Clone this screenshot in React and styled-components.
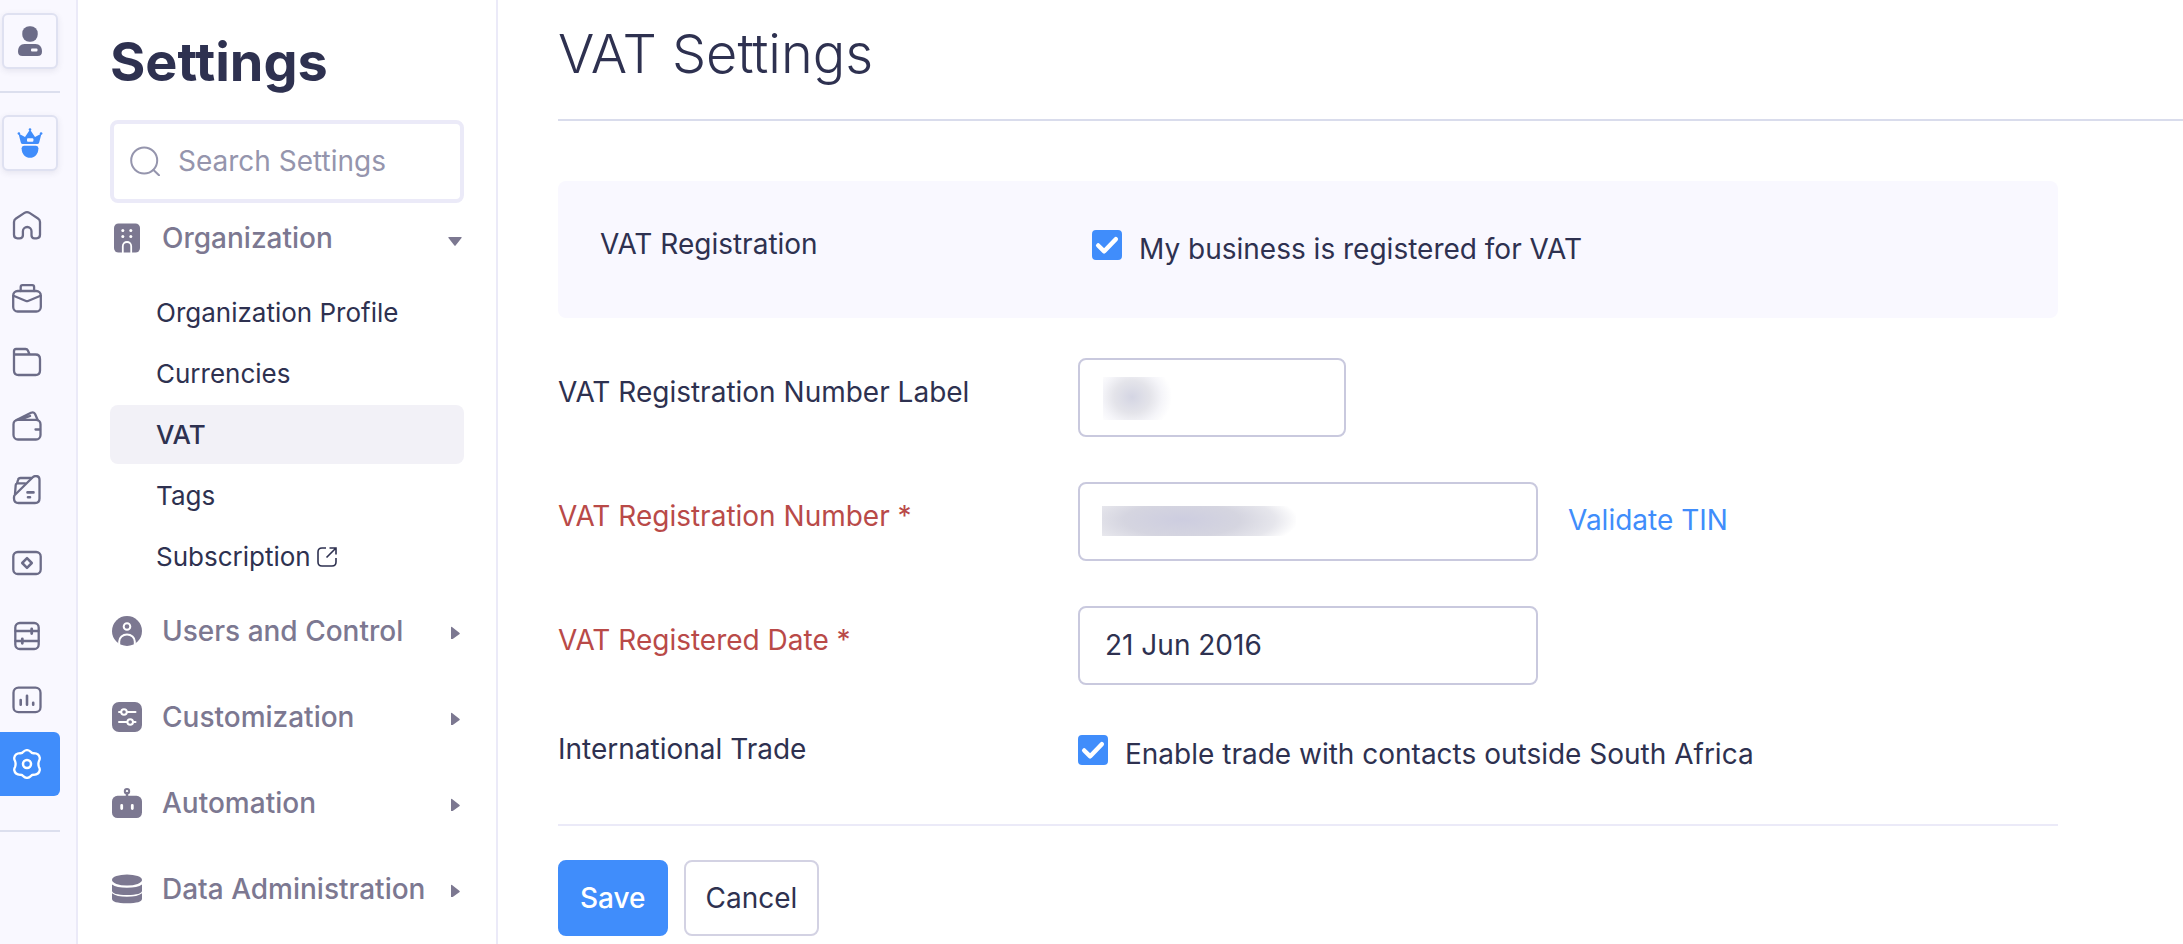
import React, { useState } from 'react';
import styled, { createGlobalStyle } from 'styled-components';

const GlobalStyle = createGlobalStyle`
    *, *::before, *::after {
        box-sizing: border-box;
    }

    body {
        margin: 0;
        background-color: #fff;
        color: #2e3150;
        font-family: Inter, "Liberation Sans", sans-serif;
        font-size: 28px;
        line-height: 38px;
    }

    button, input {
        font: inherit;
        color: inherit;
    }
`;

const Page = styled.div`
    display: flex;
    min-height: 100vh;
`;

/* ---- icon rail ---- */

const Rail = styled.nav`
    flex: none;
    width: 78px;
    padding-top: 13px;
    background-color: #f9f8ff;
    border-right: 2px solid #ebeaf8;
    color: #6c6c88;
`;

const RailTile = styled.button`
    display: flex;
    align-items: center;
    justify-content: center;
    width: 56px;
    height: 56px;
    margin-left: 2px;
    padding: 0;
    background-color: #f9f8ff;
    border: 2px solid #dfe1f1;
    border-radius: 6px;
    box-shadow: 0 2px 6px rgba(60, 60, 100, 0.1);
    color: ${(props) => (props.$brand ? '#408dfb' : 'inherit')};
    cursor: pointer;
`;

const RailDivider = styled.hr`
    width: 60px;
    height: 2px;
    margin: ${(props) => (props.$wide ? '34px 0 0' : '22px 0')};
    border: none;
    background-color: #dcdfee;
`;

const RailGroup = styled.div`
    margin-top: ${(props) => (props.$first ? '22px' : '9px')};
`;

const RailLink = styled.a`
    display: flex;
    align-items: center;
    width: 60px;
    height: 64px;
    padding-left: 12px;
    border-radius: 0 6px 6px 0;
    color: ${(props) => (props.$active ? '#fff' : 'inherit')};
    background-color: ${(props) => (props.$active ? '#408dfb' : 'transparent')};
`;

/* ---- settings sidebar ---- */

const Sidebar = styled.aside`
    flex: none;
    width: 420px;
    padding: 28px 32px 24px;
    border-right: 2px solid #ebeaf8;
`;

const SidebarTitle = styled.h2`
    margin: 0 0 24px;
    font-size: 54px;
    line-height: 68px;
    font-weight: 700;
`;

const SearchBox = styled.label`
    display: flex;
    align-items: center;
    gap: 18px;
    height: 83px;
    padding: 0 16px 2px;
    border: 4px solid #ebeaf8;
    border-radius: 8px;
    color: #9595ad;
`;

const SearchInput = styled.input`
    flex: 1;
    min-width: 0;
    padding: 0;
    border: none;
    outline: none;
    background: none;

    &::placeholder {
        color: #9595ad;
        opacity: 1;
    }
`;

const Category = styled.button`
    display: flex;
    align-items: center;
    width: 100%;
    margin-top: ${(props) => (props.$first ? '16px' : '48px')};
    padding: 0 0 0 2px;
    border: none;
    background: none;
    color: #7c7891;
    font-weight: 500;
    text-align: left;
    cursor: pointer;
`;

const CategoryName = styled.span`
    flex: 1;
    padding-left: 20px;
    white-space: nowrap;
`;

const SubMenu = styled.ul`
    display: flex;
    flex-direction: column;
    gap: 2px;
    margin: 26px 0 -22px;
    padding: 0;
    list-style: none;
`;

const SubLink = styled.a`
    display: flex;
    align-items: center;
    gap: 6px;
    height: 59px;
    padding-left: 46px;
    border-radius: 8px;
    font-size: 26px;
    font-weight: ${(props) => (props.$active ? 500 : 400)};
    background-color: ${(props) => (props.$active ? '#f2f1f7' : 'transparent')};
    color: #2e3150;
    text-decoration: none;
`;

/* ---- main form ---- */

const Main = styled.main`
    flex: 1;
    min-width: 0;
    padding-left: 60px;
`;

const PageTitle = styled.h1`
    margin: 0;
    padding: 20px 0 31px;
    border-bottom: 2px solid #d9dcec;
    font-size: 54px;
    line-height: 68px;
    font-weight: 300;
`;

const Form = styled.form`
    padding: 60px 125px 8px 0;
`;

const Row = styled.div`
    display: flex;
    align-items: flex-start;
    margin-bottom: 45px;
`;

const Panel = styled(Row)`
    min-height: 137px;
    margin-bottom: 40px;
    padding: 44px 42px 0;
    border-radius: 8px;
    background-color: #f9f8ff;
`;

const Label = styled.label`
    flex: none;
    width: ${(props) => (props.$inPanel ? '492px' : '520px')};
    padding-top: ${(props) => (props.$field ? '15px' : '0')};
    color: ${(props) => (props.$required ? '#b94a48' : 'inherit')};
`;

const Field = styled.input`
    width: ${(props) => (props.$short ? '268px' : '460px')};
    height: 79px;
    padding: 0 25px 2px;
    border: 2px solid #c9c9de;
    border-radius: 8px;
    background-color: #fff;
    outline: none;
`;

const MaskedLabelField = styled(Field)`
    background-image: radial-gradient(ellipse 40px 36px at 29px 20px, #d4d5e3, #e4e4ea 45%, #f5f5f9 75%, #fff);
    background-repeat: no-repeat;
    background-position: 23px 17px;
    background-size: 69px 43px;
`;

const MaskedNumberField = styled(Field)`
    background-image: radial-gradient(ellipse 116px 34px at 80px 14px, #cdcde0, #d5d5e0 50%, #e6e6ec 80%, #fff);
    background-repeat: no-repeat;
    background-position: 22px 22px;
    background-size: 194px 30px;
`;

const ValidateLink = styled.a`
    margin: 19px 0 0 30px;
    color: #408dfb;
    text-decoration: none;
`;

const CheckLabel = styled.label`
    display: flex;
    align-items: flex-start;
    gap: 17px;
    padding-top: 5px;
    cursor: pointer;
`;

const CheckMark = styled.span`
    display: grid;
    width: 30px;
    height: 30px;

    & > * {
        grid-area: 1 / 1;
    }

    svg {
        pointer-events: none;
    }
`;

const CheckInput = styled.input`
    appearance: none;
    width: 30px;
    height: 30px;
    margin: 0;
    border: 2px solid #c9c9de;
    border-radius: 4px;
    background-color: #fff;

    &:checked {
        border-color: #408dfb;
        background-color: #408dfb;
    }
`;

const Actions = styled.div`
    display: flex;
    gap: 16px;
    margin-top: 51px;
    padding-top: 34px;
    border-top: 2px solid #ebeaf8;
`;

const Button = styled.button`
    height: 76px;
    padding: 0 20px;
    border: 2px solid ${(props) => (props.$primary ? '#408dfb' : '#d3d2e3')};
    border-radius: 8px;
    background-color: ${(props) => (props.$primary ? '#408dfb' : '#fff')};
    color: ${(props) => (props.$primary ? '#fff' : '#2e3150')};
    font-weight: ${(props) => (props.$primary ? 500 : 400)};
    cursor: pointer;
`;

/* ---- icons, all on a 30px grid ---- */

const Icon = ({ children, solid, weight = 2.3 }) => (
    <svg
        width="30"
        height="30"
        viewBox="0 0 30 30"
        fill={solid ? 'currentColor' : 'none'}
        stroke={solid ? 'none' : 'currentColor'}
        strokeWidth={weight}
        strokeLinecap="round"
        strokeLinejoin="round"
        aria-hidden="true"
    >
        {children}
    </svg>
);

const UserIcon = () => (
    <Icon solid>
        <rect x="7.3" y="0.2" width="15.4" height="15.6" rx="7" />
        <path d="M9.5 18h11c4 0 6.5 3 6.5 7.5q0 4.5-4.5 4.5h-15q-4.5 0-4.5-4.5c0-4.5 2.5-7.5 6.5-7.5z" />
        <rect x="16" y="22.6" width="6.5" height="2.8" rx="1" fill="#f9f8ff" />
    </Icon>
);

const CrownIcon = () => (
    <Icon solid>
        <path d="M3.5 5.5L10 9l5-7.5L20 9l6.5-3.5-2.3 9q-.4 1.500-2 1.500H7.800q-1.600 0-2-1.500z" />
        <circle cx="3.9" cy="5.5" r="1.3" />
        <circle cx="15" cy="1.5" r="1.3" />
        <circle cx="26.1" cy="5.5" r="1.3" />
        <rect x="12" y="10.3" width="6.4" height="3.4" rx="1" fill="#f9f8ff" />
        <path d="M9 17.7h12q2.4 0 2.4 2.5c0 6.4-4.2 9.6-8.4 9.6s-8.4-3.2-8.4-9.6q0-2.5 2.4-2.5z" />
    </Icon>
);

const HomeIcon = () => (
    <Icon>
        <path d="M7.5 28.3H5.5Q2 28.3 2 24.8V12q0-2.2 2-3.5l8.5-5.6q2.5-1.6 5 0L26 8.5q2 1.3 2 3.5v12.8q0 3.5-3.5 3.5h-2q-3 0-3-3v-4a4.3 4.3 0 0 0-8.6 0v4q0 3-3.4 3z" />
    </Icon>
);

const BriefcaseIcon = () => (
    <Icon>
        <rect x="1.2" y="8" width="27.6" height="20.5" rx="4.5" />
        <path d="M8.7 8V4q0-1.8 1.8-1.8h9.8q1.8 0 1.8 1.8v4M1.5 12.7L14 18q1 .4 2 0l12.5-5.3" />
    </Icon>
);

const FolderIcon = () => (
    <Icon>
        <path d="M2 8V4q0-2 2-2h9.5q1.7 0 2.4 1.5l1.7 4M2 7.5h21.5Q28 7.5 28 12v11.5q0 4.5-4.5 4.5h-17Q2 28 2 23.5z" />
    </Icon>
);

const WalletIcon = () => (
    <Icon>
        <rect x="1.5" y="8.8" width="27" height="19.7" rx="4.5" />
        <path d="M4.5 9L19 1.8q3-1.3 4.2 1.4l2.5 5.8M9 8.5l9-3.5M23.5 18.5H28" />
    </Icon>
);

const BankingIcon = () => (
    <Icon>
        <path d="M3.3 19.5L20.5 2.5q1.5-1.5 3.3-1.5 3.7 0 3.7 3.7V23.5q0 4.5-4.5 4.5H6.5Q2 28 2 23.5v-1.5q0-1.3 1.3-2.5z" />
        <path d="M19.5 3H8.5Q6.5 3 6 5L5 8.3M13 8.3H5.5q-1.5 0-1.8 1.8L3 19" />
        <path d="M15.5 17.4h6M16 22.3h2" strokeWidth="2.6" />
    </Icon>
);

const CardIcon = () => (
    <Icon>
        <rect x="1.3" y="4" width="27.4" height="22" rx="4.5" />
        <path d="M15 10.2l4.8 4.8-4.8 4.8-4.8-4.8z" strokeWidth="2.5" />
    </Icon>
);

const LedgerIcon = () => (
    <Icon>
        <rect x="3.3" y="2" width="23.4" height="26" rx="4.5" />
        <path d="M3.5 10h23M3.5 20h23" />
        <path d="M19.7 8v4.5M10.3 17.8v4.5" strokeWidth="2.8" />
    </Icon>
);

const ReportIcon = () => (
    <Icon>
        <rect x="1.5" y="2.7" width="27" height="24.5" rx="5" />
        <path d="M8.7 15v4.8M15 10.8v9M21.2 17.7v2" strokeWidth="2.6" />
    </Icon>
);

const GearIcon = () => (
    <Icon>
        <path d="M11.2 2.9Q15 -.6 18.8 2.9Q19.8 4.4 21.8 4.2Q27 4.4 27.8 9Q27.8 10.8 27 11.9Q25.8 15 27 18.1Q27.8 19.2 27.8 21Q27 25.6 21.8 25.8Q19.8 25.6 18.8 27.1Q15 30.6 11.2 27.1Q10.2 25.6 8.2 25.8Q3 25.6 2.2 21Q2.2 19.2 3 18.1Q4.2 15 3 11.9Q2.2 10.8 2.2 9Q3 4.4 8.2 4.2Q10.2 4.4 11.2 2.9Z" />
        <circle cx="15" cy="15" r="4" strokeWidth="2.5" />
    </Icon>
);

const SearchIcon = () => (
    <Icon weight={2}>
        <circle cx="14.2" cy="14.5" r="13" />
        <path d="M23.5 24l5.5 5.3" />
    </Icon>
);

const BuildingIcon = () => (
    <Icon solid>
        <rect x="2" y="0.5" width="26" height="29" rx="4.5" />
        <g fill="#fff">
            <circle cx="10.8" cy="7.5" r="1.5" />
            <circle cx="18.8" cy="7.5" r="1.5" />
            <circle cx="10.8" cy="13.5" r="1.5" />
            <circle cx="18.8" cy="13.5" r="1.5" />
        </g>
        <path d="M10.8 29.5v-6.3a4.2 4.2 0 0 1 8.4 0v6.3" fill="none" stroke="#fff" strokeWidth="1.8" />
    </Icon>
);

const UsersIcon = () => (
    <Icon solid>
        <circle cx="15" cy="15" r="15" />
        <circle cx="15" cy="10.5" r="3.3" fill="none" stroke="#fff" strokeWidth="2" />
        <path d="M7.2 28v-2.5a7.8 7 0 0 1 15.6 0V28" fill="none" stroke="#fff" strokeWidth="2" />
    </Icon>
);

const CustomizeIcon = () => (
    <Icon solid>
        <rect width="30" height="30" rx="7" />
        <g fill="#7c7891" stroke="#fff" strokeWidth="2">
            <path d="M7 10h16.5M7 20h16.5" />
            <circle cx="12" cy="10" r="2.8" />
            <circle cx="18.2" cy="20" r="2.8" />
        </g>
    </Icon>
);

const RobotIcon = () => (
    <Icon solid>
        <circle cx="15" cy="3.2" r="2.2" fill="none" stroke="currentColor" strokeWidth="2" />
        <path d="M15 5v4" stroke="currentColor" strokeWidth="2.4" />
        <rect y="7.8" width="30" height="22.2" rx="5.5" />
        <path d="M9.7 17.3v3.2M20.3 17.3v3.2" stroke="#fff" strokeWidth="2.8" />
    </Icon>
);

const DatabaseIcon = () => (
    <Icon solid>
        <ellipse cx="15" cy="6" rx="15" ry="5.5" />
        <path d="M0 10.5q4.5 3.3 15 3.3t15-3.3v6.2q0 4.2-15 4.2t-15-4.2z" />
        <path d="M0 19.3q4.5 3.5 15 3.5t15-3.5v5.5q0 4.5-15 4.5t-15-4.5z" />
    </Icon>
);

const ExternalIcon = () => (
    <svg width="20" height="20" viewBox="0 0 20 20" fill="none" stroke="currentColor" strokeWidth="1.6" aria-hidden="true">
        <path d="M9 1H5Q1 1 1 5v10q0 4 4 4h10q4 0 4-4v-4M9.5 10.5L18.5 1.5M12.5 1H19v6.5" />
    </svg>
);

const Caret = ({ open }) => (
    <svg width="16" height="16" viewBox="0 0 16 16" fill="currentColor" aria-hidden="true">
        {open ? (
            <path d="M1 7h12q1.3 0 .5 1l-5.7 7.3q-.8 1-1.6 0L.5 8q-.8-1 .5-1z" />
        ) : (
            <path d="M3 4.5q0-1.3 1-.5l7.3 5.7q1 .8 0 1.6L4 16.500q-1 .8-1-.5z" />
        )}
    </svg>
);

const railGroups = [
    [{ name: 'Home', icon: HomeIcon }],
    [
        { name: 'Items', icon: BriefcaseIcon },
        { name: 'Files', icon: FolderIcon },
        { name: 'Wallet', icon: WalletIcon },
        { name: 'Banking', icon: BankingIcon },
    ],
    [{ name: 'Payments', icon: CardIcon }],
    [
        { name: 'Accountant', icon: LedgerIcon },
        { name: 'Reports', icon: ReportIcon },
        { name: 'Settings', icon: GearIcon, active: true },
    ],
];

const organizationLinks = ['Organization Profile', 'Currencies', 'VAT', 'Tags', 'Subscription'];

const categories = [
    { name: 'Users and Control', icon: UsersIcon },
    { name: 'Customization', icon: CustomizeIcon },
    { name: 'Automation', icon: RobotIcon },
    { name: 'Data Administration', icon: DatabaseIcon },
];

function Checkbox({ id, checked, onChange, children }) {
    return (
        <CheckLabel htmlFor={id}>
            <CheckMark>
                <CheckInput id={id} type="checkbox" checked={checked} onChange={(e) => onChange(e.target.checked)} />
                {checked && (
                    <svg width="30" height="30" viewBox="0 0 30 30" fill="none" stroke="#fff" strokeWidth="4.5" strokeLinecap="round" strokeLinejoin="round" aria-hidden="true">
                        <path d="M6.2 15.5l6 5.8L23.8 9.2" />
                    </svg>
                )}
            </CheckMark>
            <span>{children}</span>
        </CheckLabel>
    );
}

function App() {
    const [open, setOpen] = useState(true);
    const [registered, setRegistered] = useState(true);
    const [trade, setTrade] = useState(true);

    return (
        <Page>
            <GlobalStyle />
            <Rail aria-label="Main">
                <RailTile type="button" aria-label="Account">
                    <UserIcon />
                </RailTile>
                <RailDivider />
                <RailTile type="button" $brand aria-label="Company">
                    <CrownIcon />
                </RailTile>
                {railGroups.map((group, index) => (
                    <RailGroup key={index} $first={index === 0}>
                        {group.map(({ name, icon: ItemIcon, active }) => (
                            <RailLink key={name} href="#" aria-label={name} $active={active}>
                                <ItemIcon />
                            </RailLink>
                        ))}
                    </RailGroup>
                ))}
                <RailDivider $wide />
            </Rail>

            <Sidebar>
                <SidebarTitle>Settings</SidebarTitle>
                <SearchBox>
                    <SearchIcon />
                    <SearchInput type="text" placeholder="Search Settings" aria-label="Search Settings" />
                </SearchBox>
                <Category type="button" $first aria-expanded={open} onClick={() => setOpen(!open)}>
                    <BuildingIcon />
                    <CategoryName>Organization</CategoryName>
                    <Caret open={open} />
                </Category>
                {open && (
                    <SubMenu>
                        {organizationLinks.map((name) => (
                            <li key={name}>
                                <SubLink href="#" $active={name === 'VAT'}>
                                    {name}
                                    {name === 'Subscription' && <ExternalIcon />}
                                </SubLink>
                            </li>
                        ))}
                    </SubMenu>
                )}
                {categories.map(({ name, icon: ItemIcon }) => (
                    <Category key={name} type="button" aria-expanded={false}>
                        <ItemIcon />
                        <CategoryName>{name}</CategoryName>
                        <Caret />
                    </Category>
                ))}
            </Sidebar>

            <Main>
                <PageTitle>VAT Settings</PageTitle>
                <Form onSubmit={(e) => e.preventDefault()}>
                    <Panel>
                        <Label as="span" $inPanel>VAT Registration</Label>
                        <Checkbox id="registered" checked={registered} onChange={setRegistered}>
                            My business is registered for VAT
                        </Checkbox>
                    </Panel>
                    <Row>
                        <Label htmlFor="numberLabel" $field>VAT Registration Number Label</Label>
                        <MaskedLabelField id="numberLabel" type="text" $short />
                    </Row>
                    <Row>
                        <Label htmlFor="number" $field $required>VAT Registration Number *</Label>
                        <MaskedNumberField id="number" type="text" />
                        <ValidateLink href="#">Validate TIN</ValidateLink>
                    </Row>
                    <Row>
                        <Label htmlFor="date" $field $required>VAT Registered Date *</Label>
                        <Field id="date" type="text" defaultValue="21 Jun 2016" />
                    </Row>
                    <Row>
                        <Label as="span">International Trade</Label>
                        <Checkbox id="trade" checked={trade} onChange={setTrade}>
                            Enable trade with contacts outside South Africa
                        </Checkbox>
                    </Row>
                    <Actions>
                        <Button type="submit" $primary>Save</Button>
                        <Button type="button">Cancel</Button>
                    </Actions>
                </Form>
            </Main>
        </Page>
    );
}

export default App;
